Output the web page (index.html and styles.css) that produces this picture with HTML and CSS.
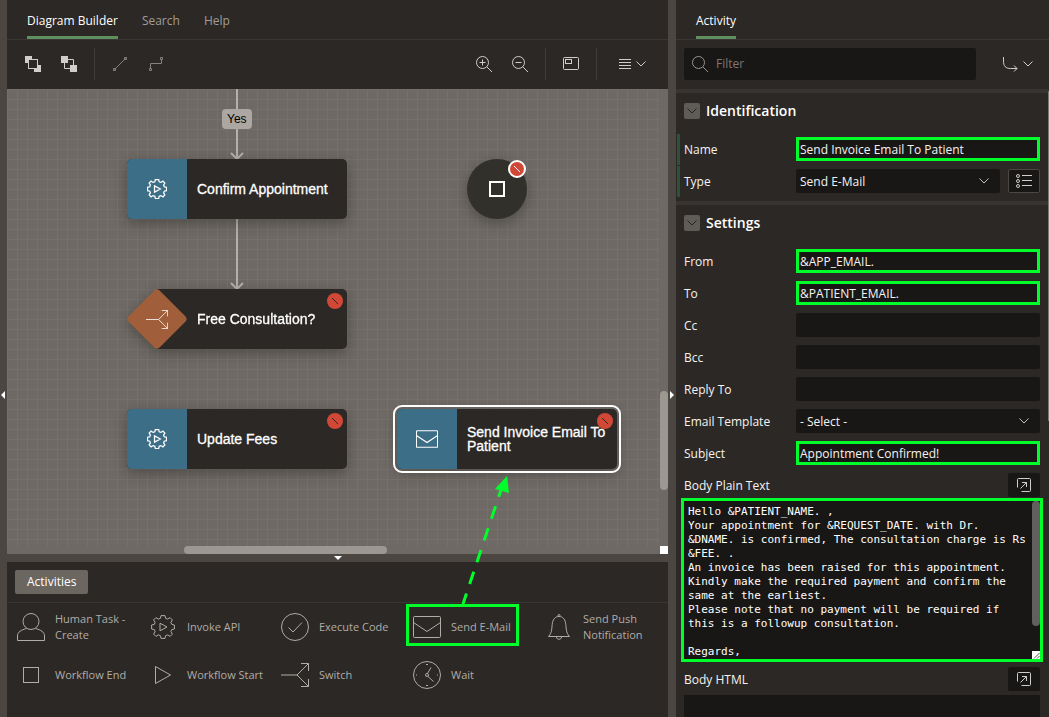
FILE: index.html
```html
<!DOCTYPE html>
<html lang="en">
<head>
<meta charset="utf-8">
<title>Workflow Designer</title>
<link rel="stylesheet" href="styles.css">
</head>
<body>
<svg class="defs" aria-hidden="true">
  <symbol id="gear" viewBox="0 0 24 24"><path d="M10 .6h4l.6 2.7 2.1.8 2.4-1.5 2.3 2.3-1.5 2.4.8 2.1 2.7.6v4l-2.7.6-.8 2.1 1.5 2.4-2.3 2.3-2.4-1.5-2.1.8-.6 2.7h-4l-.6-2.7-2.1-.8-2.4 1.5-2.3-2.3 1.5-2.4-.8-2.1L.6 14v-4l2.700-.6.8-2.1-1.5-2.4 2.3-2.3 2.4 1.500 2.1-.8zM9 8.2v7.6l7-3.800z"/></symbol>
  <symbol id="mail" viewBox="0 0 28 22"><rect x=".5" y=".5" width="27" height="21" rx="1"/><path d="M.5 6.500 14 15.500 27.500 6.500"/></symbol>
  <symbol id="switch" viewBox="0 0 28 24"><path d="M0 12h16L27.500.5M16 12l11.500 11.500M20 .5h7.500V8M20 23.500h7.500V16"/></symbol>
  <symbol id="chevron" viewBox="0 0 10 6"><path d="M.5.5 5 5 9.500.5"/></symbol>
  <symbol id="popout" viewBox="0 0 14 14"><path d="M.5 9.500v-8a1 1 0 0 1 1-1h11a1 1 0 0 1 1 1v11a1 1 0 0 1-1 1h-8M3.500 10.500l6-6M5 4.500h4.500V9"/></symbol>
</svg>
<div class="app">
  <div class="splitter splitter-v"><span class="grip grip-left"></span></div>
  <main class="builder">
    <nav class="tabs">
      <a class="tab active" href="#builder">Diagram Builder</a>
      <a class="tab" href="#search">Search</a>
      <a class="tab" href="#help">Help</a>
    </nav>
    <div class="toolbar">
      <button class="tool" aria-label="Bring to front"><svg width="16" height="16"><path class="fill" d="M0 0h7v3H3v4H0zM16 16H9v-3h4V9h3z"/><rect x="3.500" y="3.500" width="9" height="9"/></svg></button>
      <button class="tool" aria-label="Send to back"><svg width="16" height="16"><path d="M7 3.500h5.500V9M3.500 7v5.500H9"/><path class="fill" d="M0 0h7v7H0zM9 9h7v7H9z"/></svg></button>
      <span class="divider"></span>
      <button class="tool dim" aria-label="Straight connector"><svg width="16" height="16"><path d="M2.500 13.500l11-11M1.500 12.500h2v2h-2zM12.500 1.500h2v2h-2z"/></svg></button>
      <button class="tool dim" aria-label="Elbow connector"><svg width="16" height="16"><path d="M2.500 12.500v-5h11v-4M1.500 12.500h2v2h-2zM12.500 1.500h2v2h-2z"/></svg></button>
      <span class="spacer"></span>
      <button class="tool" aria-label="Zoom in"><svg width="16" height="16"><circle cx="6.500" cy="6.500" r="6"/><path d="M11 11l5 5M3.500 6.500h6M6.500 3.500v6"/></svg></button>
      <button class="tool" aria-label="Zoom out"><svg width="16" height="16"><circle cx="6.500" cy="6.500" r="6"/><path d="M11 11l5 5M3.500 6.500h6"/></svg></button>
      <span class="divider"></span>
      <button class="tool" aria-label="Overview"><svg width="16" height="14"><rect x=".5" y=".5" width="15" height="12" rx="1"/><rect x="2.500" y="2.500" width="6" height="4"/></svg></button>
      <span class="divider"></span>
      <button class="tool wide" aria-label="Menu"><svg width="12" height="12"><path d="M0 1.500h12M0 4.500h12M0 7.500h12M0 10.500h12"/></svg><svg width="10" height="6"><use href="#chevron"/></svg></button>
    </div>
    <section class="canvas" aria-label="Workflow diagram">
      <div class="grid"></div>
      <svg class="links" width="653" height="457"><path d="M230 0v69M224 64l6 6 6-6M230 130v69M224 194l6 6 6-6"/></svg>
      <span class="link-label">Yes</span>
      <div class="node n-confirm"><span class="node-icon"><svg width="20" height="20"><use href="#gear"/></svg></span><span class="node-name">Confirm Appointment</span></div>
      <div class="node n-free"><svg class="diamond" width="60" height="60"><rect class="diamond-shape" x="8" y="8" width="44" height="44" rx="4" transform="rotate(45 30 30)"/><svg x="19" y="21" width="22" height="19" viewBox="0 0 28 24"><use href="#switch"/></svg></svg><span class="node-name">Free Consultation?</span><svg class="badge" width="16" height="16"><circle cx="8" cy="8" r="8"/><path d="M5 5l6 6"/></svg></div>
      <div class="node n-fees"><span class="node-icon"><svg width="20" height="20"><use href="#gear"/></svg></span><span class="node-name">Update Fees</span><svg class="badge" width="16" height="16"><circle cx="8" cy="8" r="8"/><path d="M5 5l6 6"/></svg></div>
      <div class="node n-mail"><span class="node-icon"><svg width="22" height="18"><use href="#mail"/></svg></span><svg class="badge" width="16" height="16"><circle cx="8" cy="8" r="8"/><path d="M5 5l6 6"/></svg><span class="node-name">Send Invoice Email To Patient</span></div>
      <div class="node-end"><svg width="16" height="16"><rect x="1" y="1" width="14" height="14"/></svg><svg class="badge badge-ring" width="20" height="20"><circle class="ring" cx="10" cy="10" r="8"/><path d="M7 7l6 6"/></svg></div>
      <span class="thumb thumb-v"></span><span class="thumb thumb-h"></span><span class="corner"></span>
    </section>
    <div class="splitter splitter-h"><span class="grip grip-down"></span></div>
    <section class="palette">
      <div class="palette-head"><button class="palette-tab">Activities</button></div>
      <ul class="activities">
        <li><button class="activity"><span class="activity-icon"><svg width="28" height="28"><circle cx="14" cy="8.500" r="8"/><path d="M9.500 15.500C4 17 .5 19 .5 23v4.500h27V23c0-4-3.500-6-9-7.500"/></svg></span>Human Task - Create</button></li>
        <li><button class="activity"><span class="activity-icon"><svg width="24" height="24"><use href="#gear"/></svg></span>Invoke API</button></li>
        <li><button class="activity"><span class="activity-icon"><svg width="28" height="28"><circle cx="14" cy="14" r="13.500"/><path d="M7.500 14.500l4.500 4.500 9-9.500"/></svg></span>Execute Code</button></li>
        <li><button class="activity marked"><span class="activity-icon"><svg width="28" height="22"><use href="#mail"/></svg></span>Send E-Mail</button></li>
        <li><button class="activity"><span class="activity-icon"><svg width="22" height="26"><path d="M.5 22.500h21c-4-4-3-9-4-14-1-4-3-6-6.500-6s-5.500 2-6.500 6c-1 5 0 10-4 14zM8.500 23c0 3 5 3 5 0"/><circle cx="11" cy="1.500" r="1"/></svg></span>Send Push Notification</button></li>
        <li><button class="activity"><span class="activity-icon"><svg width="16" height="16"><rect x=".5" y=".5" width="15" height="15"/></svg></span>Workflow End</button></li>
        <li><button class="activity"><span class="activity-icon"><svg width="18" height="18"><path d="M1.500.5v17L16.500 9z"/></svg></span>Workflow Start</button></li>
        <li><button class="activity"><span class="activity-icon"><svg width="28" height="24"><use href="#switch"/></svg></span>Switch</button></li>
        <li><button class="activity"><span class="activity-icon"><svg width="28" height="28"><circle cx="14" cy="14" r="13.500"/><circle cx="14" cy="14" r="1.500"/><path d="M14.500 12.500l3.500-6M15 15.500l5.500 5M13 3.500h2M13 24.500h2M3 14h1M24 14h1"/></svg></span>Wait</button></li>
      </ul>
    </section>
    <svg class="callout" width="80" height="140"><path class="callout-line" d="M16 130 54 16"/><path class="callout-head" d="M60 2 48 15l14 4z"/></svg>
  </main>
  <div class="splitter splitter-v"><span class="grip grip-right"></span></div>
  <aside class="props">
    <nav class="tabs"><a class="tab active" href="#activity">Activity</a></nav>
    <div class="filter-row">
      <label class="filter"><svg width="16" height="16"><circle cx="6.500" cy="6.500" r="6"/><path d="M11 11l5 5"/></svg><input type="search" placeholder="Filter" aria-label="Filter"></label>
      <button class="tool goto" aria-label="Go to group"><svg width="15" height="15"><path d="M.5 0v4c0 5 2 7.500 7 7.500h6.500M11 8.500l3 3-3 3"/></svg><svg width="10" height="6"><use href="#chevron"/></svg></button>
    </div>
    <div class="groups">
      <section class="group">
        <h2><button class="toggle" aria-label="Collapse Identification"><svg width="10" height="6"><use href="#chevron"/></svg></button>Identification</h2>
        <div class="row required"><label for="name">Name</label><input id="name" class="field marked" value="Send Invoice Email To Patient"></div>
        <div class="row required"><label for="type">Type</label><span class="select"><select id="type" class="field"><option>Send E-Mail</option></select><svg width="10" height="6"><use href="#chevron"/></svg></span><button class="list-btn" aria-label="Pick type"><svg width="16" height="14"><circle cx="2" cy="2" r="1.500"/><circle cx="2" cy="7" r="1.500"/><circle cx="2" cy="12" r="1.500"/><path d="M6 1.500h10M6 6.500h10M6 11.500h10"/></svg></button></div>
      </section>
      <section class="group">
        <h2><button class="toggle" aria-label="Collapse Settings"><svg width="10" height="6"><use href="#chevron"/></svg></button>Settings</h2>
        <div class="row"><label for="from">From</label><input id="from" class="field marked" value="&amp;APP_EMAIL."></div>
        <div class="row"><label for="to">To</label><input id="to" class="field marked" value="&amp;PATIENT_EMAIL."></div>
        <div class="row"><label for="cc">Cc</label><input id="cc" class="field"></div>
        <div class="row"><label for="bcc">Bcc</label><input id="bcc" class="field"></div>
        <div class="row"><label for="reply">Reply To</label><input id="reply" class="field"></div>
        <div class="row"><label for="template">Email Template</label><span class="select"><select id="template" class="field"><option>- Select -</option></select><svg width="10" height="6"><use href="#chevron"/></svg></span></div>
        <div class="row"><label for="subject">Subject</label><input id="subject" class="field marked" value="Appointment Confirmed!"></div>
        <div class="row head"><label for="plain">Body Plain Text</label><button class="pop" aria-label="Open plain text editor"><svg width="14" height="14"><use href="#popout"/></svg></button></div>
        <div class="area marked"><textarea id="plain">Hello &amp;PATIENT_NAME. ,
Your appointment for &amp;REQUEST_DATE. with Dr. &amp;DNAME. is confirmed, The consultation charge is Rs &amp;FEE. .
An invoice has been raised for this appointment. Kindly make the required payment and confirm the same at the earliest.
Please note that no payment will be required if this is a followup consultation.

Regards,</textarea><span class="thumb area-thumb"></span><svg class="resizer" width="8" height="8"><path d="M2 7.500 7.500 2M5 7.500 7.500 5"/></svg></div>
        <div class="row head"><label for="html">Body HTML</label><button class="pop" aria-label="Open HTML editor"><svg width="14" height="14"><use href="#popout"/></svg></button></div>
        <div class="area"><textarea id="html"></textarea></div>
      </section>
      <span class="thumb panel-thumb"></span>
    </div>
  </aside>
</div>
</body>
</html>
```
FILE: styles.css
```css
* { box-sizing: border-box; }
:root {
  --panel: #2c2825;
  --field: #191715;
  --split: #4b4642;
  --line: #3a3633;
  --text: #f5f3f1;
  --muted: #b0aca8;
  --mark: #00ff2a;
  --ui: "Open Sans", "Noto Sans", sans-serif;
}
body { margin: 0; background: var(--panel); color: var(--text); font: 12px/16px var(--ui); }
button, input, select { font: inherit; color: inherit; }
button { border: 0; padding: 0; background: none; cursor: pointer; }
svg { fill: none; stroke: currentColor; stroke-width: 1; flex: none; }
.fill { fill: currentColor; stroke: none; }
.defs { position: absolute; width: 0; height: 0; }

.app { display: grid; grid-template-columns: 7px minmax(0, 661fr) 8px minmax(0, 373fr); height: 100vh; overflow: hidden; }
.splitter { position: relative; background: var(--split); }
.splitter-h { height: 8px; }
.grip { position: absolute; border: 4px solid transparent; }
.grip-left { top: 391px; left: -3px; border-right-color: #fff; }
.grip-right { top: 391px; left: 2px; border-left-color: #fff; }
.grip-down { left: 50%; top: 2px; margin-left: -4px; border-top-color: #fff; }

.builder { position: relative; display: flex; flex-direction: column; min-width: 0; }
.tabs { display: flex; gap: 24px; flex: none; height: 40px; padding: 0 20px; border-bottom: 1px solid var(--line); }
.tab { height: 39px; color: #a09c98; text-decoration: none; line-height: 42px; }
.tab.active { color: #fff; font-weight: 500; border-bottom: 3px solid #5f8f5f; }
.toolbar { display: flex; align-items: center; flex: none; height: 49px; padding: 0 8px 1px; }
.tool { display: flex; align-items: center; justify-content: center; gap: 5px; width: 36px; height: 32px; color: #d0cdca; }
.tool.wide { width: 56px; }
.tool.dim { color: #85817d; }
.divider { width: 1px; height: 32px; margin: 0 7px; background: #403c39; }
.spacer { flex: 1; }

.canvas { position: relative; flex: 1; min-height: 0; overflow: hidden; background: #6e6964; font-family: "Liberation Sans", Arial, sans-serif; }
.grid { position: absolute; inset: 0 8px 8px 0; background-image: linear-gradient(#75706b 1px, transparent 1px), linear-gradient(90deg, #75706b 1px, transparent 1px); background-size: 10px 10px; }
.links { position: absolute; left: 0; top: 0; stroke: #b5b0ab; stroke-width: 2; }
.link-label { position: absolute; left: 215px; top: 20px; padding: 2px 5px; border-radius: 4px; background: #aca7a1; color: #000; }
.node { position: absolute; display: flex; width: 220px; height: 60px; border-radius: 5px; background: var(--panel); box-shadow: 0 4px 14px rgba(0, 0, 0, .3); }
.node-icon { display: flex; align-items: center; justify-content: center; width: 60px; flex: none; border-radius: 5px 0 0 5px; background: #3c6e87; color: #fff; }
.node-icon svg, .diamond { stroke-width: 1.5; }
.node-name { position: relative; align-self: center; padding-left: 10px; color: #fff; font-size: 14px; line-height: 14px; -webkit-text-stroke: .3px #fff; }
.n-confirm { left: 120px; top: 70px; }
.n-free { left: 120px; top: 200px; background: linear-gradient(90deg, transparent 30px, var(--panel) 30px); box-shadow: none; filter: drop-shadow(0 4px 7px rgba(0, 0, 0, .3)); }
.n-fees { left: 120px; top: 320px; }
.n-mail { left: 390px; top: 320px; outline: 2px solid #fff; outline-offset: 2px; }
.diamond { color: #fff; }
.diamond-shape { fill: #a05f3a; stroke: none; }
.badge { position: absolute; right: 4px; top: 4px; }
.badge circle { fill: #d14836; stroke: none; }
.badge path { stroke: #2c2825; }
.node-end { position: absolute; left: 460px; top: 70px; display: flex; align-items: center; justify-content: center; width: 60px; height: 60px; border-radius: 50%; background: #32302b; color: #fff; box-shadow: 0 4px 14px rgba(0, 0, 0, .3); }
.node-end > svg { stroke-width: 2; }
.node-end > .badge-ring { right: 0; top: 0; }
.badge-ring .ring { stroke: #fff; stroke-width: 2; }
.node-end .badge-ring path { stroke: #fff; stroke-width: 1; }
.thumb { position: absolute; border-radius: 4px; background: #9b9791; }
.thumb-v { right: 0; bottom: 64px; width: 8px; height: 99px; }
.thumb-h { left: 177px; bottom: 0; width: 203px; height: 8px; }
.corner { position: absolute; right: 0; bottom: 0; width: 8px; height: 8px; background: #fff; }

.palette { flex: none; min-height: 155px; background: var(--panel); }
.palette-head { padding: 8px; border-bottom: 1px solid var(--line); }
.palette-tab { display: block; height: 24px; padding: 0 12px; border-radius: 2px; background: #6b6660; color: #fff; font-weight: 500; }
.activities { display: grid; grid-template-columns: repeat(auto-fill, 132px); margin: 0; padding: 0; list-style: none; }
.activities li { height: 48px; padding: 1px 3px 5px; }
.activity { display: flex; align-items: center; gap: 6px; height: 42px; padding: 4px 0 0; border: 3px solid transparent; color: var(--muted); font-size: 11px; text-align: left; }
.activity-icon { display: flex; justify-content: center; flex: none; width: 36px; }
.activity.marked { padding-right: 5px; border-color: var(--mark); }
.callout { position: absolute; left: 440px; bottom: 103px; pointer-events: none; }
.callout-line { stroke: var(--mark); stroke-width: 3; stroke-dasharray: 13 10; stroke-dashoffset: 2; }
.callout-head { fill: var(--mark); stroke: none; }

.props { display: flex; flex-direction: column; min-width: 0; min-height: 0; }
.filter-row { display: flex; align-items: center; gap: 20px; flex: none; height: 49px; padding: 0 9px 1px 8px; }
.filter { display: flex; align-items: center; gap: 8px; flex: 1; min-width: 0; height: 32px; padding: 0 8px; border-radius: 2px; background: var(--field); color: #96928e; }
.filter input { flex: 1; min-width: 0; padding: 0; border: 0; outline: 0; background: none; appearance: none; }
.filter input::placeholder { color: #7c7874; }
.goto { width: 44px; }
.groups { position: relative; flex: 1; min-height: 0; overflow: hidden; }
.group { padding-bottom: 4px; border-top: 4px solid #383431; }
.group h2 { display: flex; align-items: center; gap: 6px; height: 36px; margin: 0 0 4px; padding: 0 8px; color: #fff; font-size: 14px; font-weight: 600; }
.toggle { display: flex; align-items: center; justify-content: center; width: 16px; height: 16px; border-radius: 2px; background: #5f5b57; color: #24211f; }
.row { display: flex; align-items: center; height: 32px; padding: 0 9px 0 8px; }
.row label { flex: none; width: 112px; padding-top: 2px; }
.row.required { background: linear-gradient(#2d5239, #2d5239) 1px 1px / 3px 31px no-repeat; }
.field { display: block; flex: 1; width: 100%; min-width: 0; height: 24px; padding: 1px 4px 0; border: 0; border-radius: 2px; background: var(--field); appearance: none; outline: 0; }
.field.marked { border-radius: 0; outline: 3px solid var(--mark); outline-offset: -3px; }
.select { position: relative; flex: 1; min-width: 0; }
.select svg { position: absolute; right: 11px; top: 9px; color: #c4c0bc; pointer-events: none; }
.list-btn, .pop { display: flex; align-items: center; justify-content: center; width: 32px; height: 24px; border-radius: 2px; background: var(--field); color: #d0cdca; }
.list-btn { margin-left: 8px; border: 1px solid #4b4743; }
.row.head { justify-content: space-between; }
.area { position: relative; height: 158px; margin: 0 9px 4px 8px; background: var(--field); }
.area.marked { outline: 3px solid var(--mark); }
.area textarea { display: block; width: 100%; height: 100%; padding: 4px 12px 0 4px; border: 0; outline: 0; background: none; color: #fff; font: 500 11px/14px "DejaVu Sans Mono", monospace; resize: none; overflow: hidden; }
.area-thumb { right: 0; top: 0; width: 8px; height: 125px; background: #62605e; }
.resizer { position: absolute; right: 0; bottom: 0; background: #fff; stroke: #555; }
.panel-thumb { right: 0; top: 2px; width: 1px; height: 330px; background: #7b7773; }
```
